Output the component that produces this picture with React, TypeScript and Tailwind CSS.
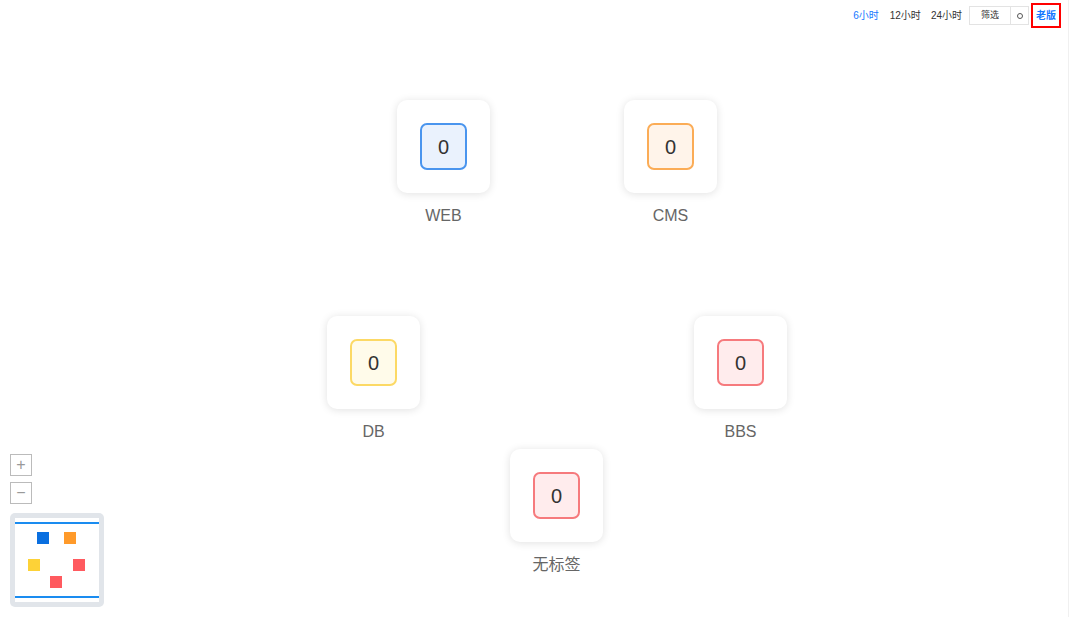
import React from "react";

type NodeItem = {
  id: string;
  label: string;
  count: number;
  left: number;
  top: number;
  box: string;
};

const nodes: NodeItem[] = [
  { id: "web", label: "WEB", count: 0, left: 397, top: 100, box: "border-[#4a95ee] bg-[#eaf2fd]" },
  { id: "cms", label: "CMS", count: 0, left: 624, top: 100, box: "border-[#fbac56] bg-[#fff4ea]" },
  { id: "db", label: "DB", count: 0, left: 327, top: 316, box: "border-[#fcd965] bg-[#fffbea]" },
  { id: "bbs", label: "BBS", count: 0, left: 694, top: 316, box: "border-[#f67a7d] bg-[#ffeced]" },
  { id: "none", label: "无标签", count: 0, left: 510, top: 449, box: "border-[#f67a7d] bg-[#ffeced]" },
];

const miniDots = [
  { left: 37, top: 532, color: "bg-[#0a6fe0]" },
  { left: 64, top: 532, color: "bg-[#ff9a2a]" },
  { left: 28, top: 559, color: "bg-[#fdd237]" },
  { left: 73, top: 559, color: "bg-[#ff5a5f]" },
  { left: 50, top: 576, color: "bg-[#ff5a5f]" },
];

function TopBar() {
  return (
    <div className="absolute right-[7px] top-[3px] flex items-center text-[10px] text-[#333]">
      <span className="mr-[11px] text-[#1677ff]">6小时</span>
      <span className="mr-[10px]">12小时</span>
      <span className="mr-[7px]">24小时</span>
      <div className="flex h-[19px] items-stretch border border-[#e3e3e3] bg-white">
        <span className="flex w-[41px] items-center justify-center border-r border-[#e3e3e3] text-[9px]">筛选</span>
        <span className="flex w-[17px] items-center justify-center">
          <span className="h-[6px] w-[6px] rounded-full border border-[#555]" />
        </span>
      </div>
      <span className="ml-[2px] flex h-[25px] w-[30px] items-center justify-center border-2 border-[#f00] font-bold text-[#1677ff]">
        老版
      </span>
    </div>
  );
}

function Node({ n }: { n: NodeItem }) {
  return (
    <div className="absolute flex w-[93px] flex-col items-center" style={{ left: n.left, top: n.top }}>
      <div className="flex h-[93px] w-[93px] items-center justify-center rounded-[10px] bg-white shadow-[0_1px_8px_rgba(0,0,0,0.12)]">
        <div className={`flex h-[47px] w-[47px] items-center justify-center rounded-[7px] border-2 text-[20px] text-[#333] ${n.box}`}>
          {n.count}
        </div>
      </div>
      <div className="mt-[13px] whitespace-nowrap text-[16px] leading-[20px] text-[#666]">{n.label}</div>
    </div>
  );
}

export default function App() {
  return (
    <div
      className="relative h-[617px] w-[1069px] overflow-hidden border-r border-[#f0f0f0] bg-white"
      style={{ fontFamily: '"Liberation Sans", Arial, "Noto Sans CJK SC", sans-serif' }}
    >
      <TopBar />

      {nodes.map((n) => (
        <Node key={n.id} n={n} />
      ))}

      {/* zoom controls */}
      <div className="absolute left-[10px] top-[454px] flex flex-col gap-[6px]">
        <button className="flex h-[22px] w-[22px] items-center justify-center border border-[#bbb] bg-white text-[16px] leading-none text-[#999]">
          +
        </button>
        <button className="flex h-[22px] w-[22px] items-center justify-center border border-[#bbb] bg-white text-[16px] leading-none text-[#999]">
          −
        </button>
      </div>

      {/* minimap */}
      <div className="absolute left-[10px] top-[513px] h-[94px] w-[94px] rounded-[5px] bg-[#e1e5ea] p-[5px]">
        <div className="flex h-full w-full flex-col justify-between bg-white py-[4px]">
          <div className="h-[2px] bg-[#1a8cf0]" />
          <div className="h-[2px] bg-[#1a8cf0]" />
        </div>
      </div>
      {miniDots.map((d, i) => (
        <div
          key={i}
          className={`absolute h-[12px] w-[12px] ${d.color}`}
          style={{ left: d.left, top: d.top }}
        />
      ))}
    </div>
  );
}
